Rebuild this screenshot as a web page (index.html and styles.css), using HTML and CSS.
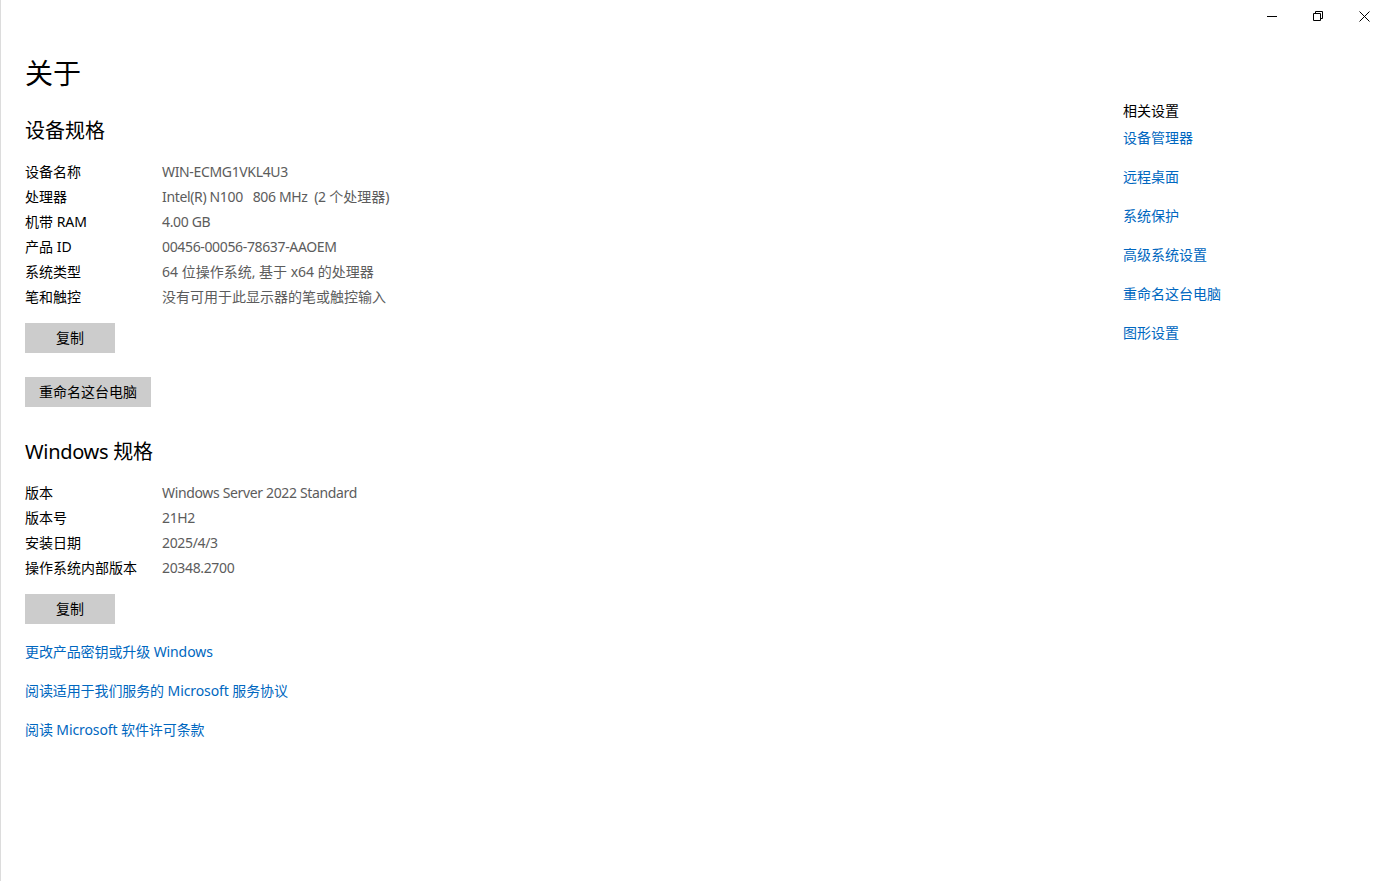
FILE: index.html
```html
<!DOCTYPE html>
<html lang="zh-CN">
<head>
<meta charset="utf-8">
<title>关于</title>
<link rel="stylesheet" href="styles.css">
</head>
<body>
<div class="window">
  <header class="titlebar">
    <div class="caption-btn">
      <svg width="10" height="10" viewBox="0 0 10 10"><path d="M0 5.5h10" stroke="#000" stroke-width="1" fill="none"/></svg>
    </div>
    <div class="caption-btn">
      <svg width="10" height="10" viewBox="0 0 10 10"><path d="M0.5 2.5h7v7h-7z M2.5 2.5v-2h7v7h-2" stroke="#000" stroke-width="1" fill="none"/></svg>
    </div>
    <div class="caption-btn">
      <svg width="11" height="11" viewBox="0 0 11 11"><path d="M0.5 0.5l10 10 M10.5 0.5l-10 10" stroke="#000" stroke-width="1" fill="none"/></svg>
    </div>
  </header>
  <div class="content">
    <main class="main">
      <h1 class="page-title">关于</h1>

      <h2 class="section-title first">设备规格</h2>
      <dl class="spec">
        <dt>设备名称</dt><dd><span class="lat">WIN-ECMG1VKL4U3</span></dd>
        <dt>处理器</dt><dd><span class="lat">Intel(R) N100&nbsp;&nbsp;&nbsp;806 MHz&nbsp;&nbsp;(2</span> 个处理器)</dd>
        <dt>机带 RAM</dt><dd><span class="lat">4.00 GB</span></dd>
        <dt>产品 ID</dt><dd><span class="lat">00456-00056-78637-AAOEM</span></dd>
        <dt>系统类型</dt><dd>64 位操作系统, 基于 x64 的处理器</dd>
        <dt>笔和触控</dt><dd>没有可用于此显示器的笔或触控输入</dd>
      </dl>
      <button class="btn copy">复制</button>
      <button class="btn rename">重命名这台电脑</button>

      <h2 class="section-title">Windows 规格</h2>
      <dl class="spec">
        <dt>版本</dt><dd><span class="lat">Windows Server 2022 Standard</span></dd>
        <dt>版本号</dt><dd><span class="lat">21H2</span></dd>
        <dt>安装日期</dt><dd><span class="lat">2025/4/3</span></dd>
        <dt>操作系统内部版本</dt><dd><span class="lat">20348.2700</span></dd>
      </dl>
      <button class="btn copy">复制</button>

      <nav class="links">
        <a href="#">更改产品密钥或升级 Windows</a>
        <a href="#">阅读适用于我们服务的 Microsoft 服务协议</a>
        <a href="#">阅读 Microsoft 软件许可条款</a>
      </nav>
    </main>
    <aside class="related">
      <h3 class="related-title">相关设置</h3>
      <nav class="links related-links">
        <a href="#">设备管理器</a>
        <a href="#">远程桌面</a>
        <a href="#">系统保护</a>
        <a href="#">高级系统设置</a>
        <a href="#">重命名这台电脑</a>
        <a href="#">图形设置</a>
      </nav>
    </aside>
  </div>
</div>
</body>
</html>
```

FILE: styles.css
```css
html, body {
  margin: 0;
  padding: 0;
  height: 100%;
  background: #ffffff;
  overflow: hidden;
}
body {
  font-family: "Noto Sans", "Noto Sans CJK SC", sans-serif;
  font-size: 14px;
  color: #000;
}
.window {
  height: 100%;
  border-left: 1px solid #dcdcdc;
  box-sizing: border-box;
}
.titlebar {
  height: 32px;
  display: flex;
  justify-content: flex-end;
  margin-right: -6px;
}
.caption-btn {
  width: 46px;
  height: 32px;
  display: flex;
  align-items: center;
  justify-content: center;
}
.content {
  display: flex;
}
.main {
  width: 1098px;
  padding-left: 24px;
  display: flex;
  flex-direction: column;
  align-items: flex-start;
}
.page-title {
  margin: 21px 0 0;
  font-size: 28px;
  font-weight: 400;
  line-height: 40px;
}
.section-title {
  margin: 31px 0 0;
  font-size: 20px;
  font-weight: 400;
  line-height: 28px;
  letter-spacing: -0.3px;
}
.section-title.first {
  margin-top: 24px;
  letter-spacing: 0;
}
.spec {
  margin: 14px 0 0;
  display: grid;
  grid-template-columns: 137px auto;
  line-height: 25px;
}
.spec dt, .spec dd {
  margin: 0;
  white-space: nowrap;
}
.spec dd {
  color: #5c5c5c;
}
.spec .lat {
  letter-spacing: -0.35px;
}
.btn {
  font-family: inherit;
  font-size: 14px;
  border: none;
  background: #cccccc;
  color: #000;
  height: 30px;
  padding: 0;
  line-height: 30px;
}
.btn.copy {
  width: 90px;
  margin-top: 14px;
}
.btn.rename {
  width: 126px;
  margin-top: 24px;
}
.links {
  display: flex;
  flex-direction: column;
  align-items: flex-start;
  gap: 19px;
  margin-top: 18px;
}
.links a {
  color: #0067c0;
  text-decoration: none;
  line-height: 20px;
}
.main .links a {
  letter-spacing: -0.1px;
}
.related {
  padding-top: 69px;
}
.related-title {
  margin: 0;
  font-size: 14px;
  font-weight: 400;
  line-height: 20px;
}
.related-links {
  margin-top: 7px;
}
```
